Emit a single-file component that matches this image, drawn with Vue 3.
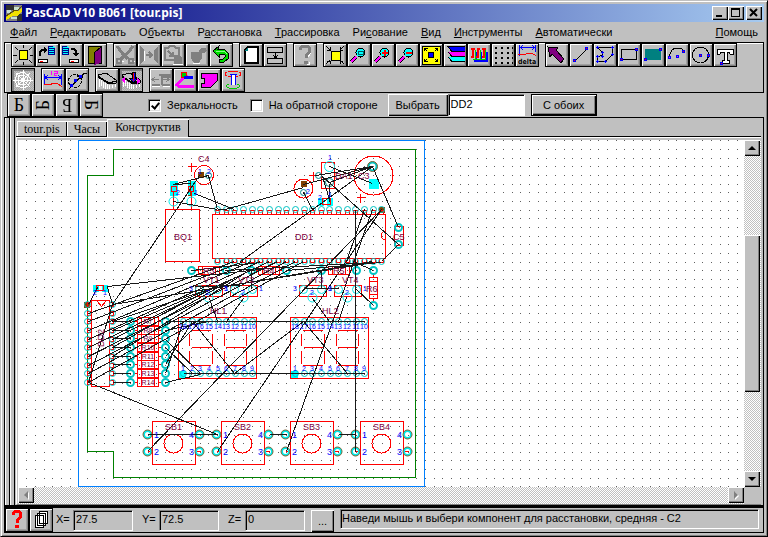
<script setup>
import { ref } from 'vue'

const menu = [
  ['', 'Ф', 'айл'], ['', 'Р', 'едактировать'], ['О', 'б', 'ъекты'], ['Р', 'а', 'сстановка'],
  ['', 'Т', 'рассировка'], ['Ри', 'с', 'ование'], ['', 'В', 'ид'], ['', 'И', 'нструменты'], ['', 'А', 'втоматически'],
]

const K = 'stroke="#000" fill="none"'
const dot = (x, y) => `<rect x="${x}" y="${y}" width="3" height="3" fill="#00f"/><rect x="${x + 1}" y="${y + 1}" width="1" height="1" fill="#f0f"/>`
const redDot = (x, y) => `<rect x="${x}" y="${y}" width="3" height="3" fill="#00f"/><rect x="${x + 1}" y="${y + 1}" width="1" height="1" fill="#f00"/>`
const doc = x => `<path d="M${x} 2h5l2 2v7h-7z" fill="#0ff"/><path d="M${x} 2.500h5M${x} 4.500h7M${x} 6.500h7M${x} 8.500h7M${x} 10.500h7M${x + 0.5} 2v9M${x + 6.5} 4v7" stroke="#008"/>`
const drive = x => `<path d="M${x}.500 15.500h9v3h-9z" fill="#fff" stroke="#000"/><path d="M${x + 2} 17h3" stroke="#f00"/>`
const lens = inner => `<path d="M3 18l5-5" stroke="#000" stroke-width="4"/><path d="M3 18l5-5" stroke="#f0f" stroke-width="2"/><circle cx="12.5" cy="8.5" r="4.5" fill="#0ff" stroke="#000"/>${inner}`
const board = '<path d="M2 6l8-2 10 7v3l-7 1L2 8z" fill="#c0c0c0" stroke="#000"/><path d="M2 7l11 7 7-2" fill="none" stroke="#000"/><path d="M3.500 10v8M5.500 11v6M7.500 13v6M9.500 14v6M11.500 15v5M13.500 16v4M16.500 16v3M19.500 15v3" stroke="#fff"/>'
const G = '#808080'

const art = {
  sun: `<path d="M7.500 6.500h8v9h-8z" fill="#ff0" stroke="#000"/><path d="M7 8l2-2M11.500 1v3M11.500 18v3M1 11.500h4M18 11.500h3M3 3l3 3M20 3l-3 3M3 19l3-3M20 19l-3-3" ${K}/>`,
  load: doc(12) + drive(2) + `<path d="M4 12V8l2-2h3" ${K} stroke-width="2"/><path d="M8 3l4 3-4 3z"/>`,
  save: doc(2) + drive(9) + `<path d="M11 5h3l2 2v3" ${K} stroke-width="2"/><path d="M13 9h6l-3 4z"/>`,
  exit: '<path d="M4.500 2.500h13v17h-13z" fill="#808000" stroke="#000"/><path d="M17 3v16l-7 2V9l4-3z" fill="#800080"/><path d="M10 20V9l7-6" fill="none" stroke="#000"/>',
  cut: `<path d="M3 2l5 7 2 2 4 4M19 2l-5 7-3 2-4 4" stroke="${G}" stroke-width="3" fill="none"/><circle cx="5" cy="17" r="2.500" fill="none" stroke="${G}" stroke-width="2"/><circle cx="17" cy="17" r="2.500" fill="none" stroke="${G}" stroke-width="2"/><path d="M8 17h2M20 17h1" stroke="#fff"/>`,
  split: `<path d="M2 2v18l4-4V6zM20 2v18l-4-4V6z" fill="${G}"/><path d="M8 11h6M11 8l3 3-3 3" stroke="${G}" stroke-width="2" fill="none"/><path d="M6.500 17V7" stroke="#fff"/>`,
  paste: `<path d="M3 4h3l2-2h4l2 2h3v12H3z" fill="none" stroke="${G}" stroke-width="2"/><path d="M6 7l5 5M11 8v4H7" fill="none" stroke="${G}" stroke-width="2"/><path d="M12 11h5l3 3v6h-8z" fill="${G}"/><path d="M11 20.500h10" stroke="#fff"/>`,
  bomb: `<path d="M5 8h11v6l-3 5H8l-3-5z" fill="${G}"/><path d="M12 9l3-5h5l1 3-3 2z" fill="${G}"/><path d="M7 19.500h7" stroke="#fff"/>`,
  undo: '<path d="M8 5h6l4 4v6l-4 3H9v-3h4l2-2v-2l-3-1H9v3L3 7l6-5z" fill="#0d0" stroke="#000"/><path d="M6 7h8l3 3" fill="none" stroke="#8f8"/>',
  blank: `<path d="M8 3h10v16H5V6z" fill="#fff" stroke="#000" stroke-width="2"/><path d="M5 7l3-4v4z" fill="#008080"/>`,
  fit: `<path d="M3.500 3.500h15v5h-15zM3.500 14.500h15v5h-15zM11.500 9v5M9 11l2.500 3 2.500-3" ${K}/>`,
  help: `<path d="M6 6q0-4 5-4t5 4q0 3-4 5v3" stroke="${G}" stroke-width="3" fill="none"/><path d="M10 17h4v3h-4z" fill="${G}"/><path d="M13 20.500h2v-3M14 13l3-4" stroke="#fff" fill="none"/>`,
  zoomfit: `<path d="M7 7h9v9H7z" fill="#ff0" stroke="#000"/><path d="M2 2l4 4M20 2l-4 4M2 20l4-4M20 20l-4-4M3 6h3V3M19 6h-3V3M3 17h3v3M19 17h-3v3" ${K}/>`,
  zoombox: lens('<path d="M10 7h5v3h-5z" fill="#0ff" stroke="#006060"/>'),
  zoomin: lens('<path d="M10 8.500h6M13 5.500v6" stroke="#f00" stroke-width="2"/>'),
  zoomout: lens('<path d="M10 8.500h6" stroke="#f00" stroke-width="2"/>'),
  all: `<path d="M2 2h18v18H2z" fill="#ff0" stroke="#000"/><circle cx="11" cy="11" r="3" fill="#00f" stroke="#000"/><path d="M4.500 7V4.500h3M4 4l3 3M17.500 7V4.500h-3M18 4l-3 3M4.500 15v2.500h3M4 18l3-3M17.500 15v2.500h-3M18 18l-3-3" ${K}/>`,
  layers: '<path d="M4 3h17v4H8z" fill="#00f"/><path d="M4 8h17v4H8z" fill="#f0f"/><path d="M4 13h17v4H8z" fill="#0ff"/><path d="M3 2.500h18M4 3l4 4.500h13M4 8l4 4.500h13M4 13l4 4.500h13" fill="none" stroke="#000"/>',
  comb: '<path d="M6 17h14M8 8v9M13 8v9M19 8v9" stroke="#00f" stroke-width="2"/><path d="M5 15h13M7 6v9M12 6v9M17 6v9" stroke="#0c0"/><path d="M3 5h4M9 5h3M14 5h4M5 5v8M10 5v8M16 5v8M3 13h3M8 13h3M14 13h3" stroke="#f00" stroke-width="2"/>',
  grid: '<path d="M3 3h2v2H3zM9 3h2v2H9zM15 3h2v2h-2zM3 8h2v2H3zM9 8h2v2H9zM15 8h2v2h-2zM3 13h2v2H3zM9 13h2v2H9zM15 13h2v2h-2zM3 18h2v2H3zM9 18h2v2H9zM15 18h2v2h-2zM20 3h1v2h-1zM20 8h1v2h-1zM20 13h1v2h-1zM20 18h1v2h-1z"/>',
  delta: '<path d="M3.500 1v11M19.500 1v7M4 3.500h15M7 1.500l-3 2 3 2M16 1.500l3 2-3 2" stroke="#00f" fill="none"/><path d="M2 10.500h7l2-1h5l4 2" stroke="#f00" fill="none"/><text x="2" y="20" font-family="DejaVu Sans Condensed" font-weight="bold" font-size="7">delta</text>',
  arrow: '<path d="M2 3l10 1-2 2 8 9-3 4-9-9-2 3z" fill="#800080" stroke="#000"/>',
  line: `<path d="M5 17L17 5" ${K}/>` + redDot(3, 15) + redDot(15, 3),
  poly: `<path d="M3.500 3.500h15v7l-7 7h-8v-5l5-1v-3z" ${K}/>` + [[2, 2], [17, 2], [17, 9], [10, 16], [2, 16], [2, 11], [7, 11], [7, 7]].map(p => `<path d="M${p[0]} ${p[1] + 1.5}h3M${p[0] + 1.5} ${p[1]}v3" stroke="#00f"/>`).join(''),
  rect: `<path d="M3.500 5.500h15v10h-15z" ${K}/>` + redDot(2, 14) + redDot(17, 4),
  fill: '<path d="M3 5h16v11H3z" fill="#008080"/>' + redDot(2, 14) + redDot(17, 4),
  arc: `<path d="M3 13Q5 4 11 4q5 0 7 3" ${K}/>` + dot(2, 12) + dot(10, 11) + redDot(16, 6),
  circle: `<circle cx="10.500" cy="11" r="8" ${K}/>` + redDot(9, 10) + redDot(17, 10),
  text: '<path d="M3 5h16v5h-3l-1-2h-2v8h2v3H8v-3h2V8H7l-1 2H3z" fill="#fff" stroke="#000"/>' + redDot(6, 18),
  web: '<path d="M11 1v20M1 11h20M4 4l14 14M18 4L4 18" stroke="#fff"/><path d="M11 3l5 3 3 5-3 6-5 2-6-2-2-6 2-6zM11 6l4 2 1 3-2 4-3 1-4-1-1-4 1-4zM11 9l2 2-2 2-2-2z" stroke="#fff" fill="none"/>',
  dim: '<path d="M2.500 5v11M19.500 5v11M3 8.500h16M6 6l-3 2.500 3 2.500M16 6l3 2.500-3 2.500" stroke="#00f" fill="none"/><path d="M2 15.500h7l1-1h5l5 3" stroke="#f00" fill="none"/><path d="M9.500 2v4M12 2.500h3v2h-3v2h3" stroke="#f0f" fill="none"/>',
  diam: `<circle cx="9" cy="12" r="6.500" ${K} stroke-dasharray="3 1"/><path d="M3 20L18 4h3M11 8l6-2-2 5" ${K}/><path d="M8 10h3v3H8zM4 15h3v3H4zM13 6h3v3h-3z" fill="#00f"/>`,
  board,
  place: board + '<path d="M12 3h3v6h3l-4.500 5L9 9h3z" fill="#00f" stroke="#000"/><path d="M13.500 4v8" stroke="#f00"/><path d="M1 11l4-3v6zM21 12l-4-3v6z" fill="#f0f"/>',
  shift: `<path d="M2 15.500h8M12 15.500h8M9 5.500h11v2h-8v8" stroke="${G}" stroke-width="2" fill="none"/><path d="M2 10.500h7M13 10.500h6M5 8l-3 2.500 3 2.500M16 8l3 2.500-3 2.500" stroke="${G}" fill="none"/><path d="M2 17.500h8M13 17.500h7" stroke="#fff"/>`,
  route: '<path d="M2 17L11 7h3M4 17h16" stroke="#f0f" stroke-width="3" fill="none"/><circle cx="10" cy="6" r="3" fill="#0c0" stroke="#f00"/><path d="M10 7h9v3h-9z" fill="#00f"/>',
  zone: '<path d="M3 4h16v8l-6 6H3v-4h3V9H3z" fill="#f0f" stroke="#000"/>',
  via: '<ellipse cx="11" cy="5" rx="8" ry="2.500" stroke="#f00" fill="none"/><path d="M9.500 6v10M13.500 6v10" stroke="#00f"/><path d="M10 6h3v10h-3z" fill="#fff"/><path d="M8 5.500h7" stroke="#00f"/><path d="M7 15q-6 2 0 4h8q6-2 0-4" stroke="#0c0" fill="none"/>',
}

const rows = [
  [
    [['sun', 'Перерисовать'], ['load', 'Загрузить'], ['save', 'Сохранить'], ['exit', 'Выход']],
    [['cut', 'Вырезать'], ['split', 'Раздвинуть'], ['paste', 'Вставить'], ['bomb', 'Удалить'], ['undo', 'Отменить']],
    [['blank', 'Новый'], ['fit', 'Выровнять']],
    [['help', 'Справка']],
    [['zoomfit', 'Всё поле'], ['zoombox', 'Окно'], ['zoomin', 'Увеличить'], ['zoomout', 'Уменьшить'], ['all', 'Показать всё'], ['layers', 'Слои'], ['comb', 'Цепи'], ['grid', 'Сетка'], ['delta', 'Дельта']],
    [['arrow', 'Выбор'], ['line', 'Линия'], ['poly', 'Полигон'], ['rect', 'Прямоугольник'], ['fill', 'Заливка'], ['arc', 'Дуга'], ['circle', 'Окружность'], ['text', 'Текст']],
  ],
  [
    [['web', 'Связи', true]],
    [['dim', 'Размер'], ['diam', 'Диаметр']],
    [['board', 'Плата'], ['place', 'Расстановка', true]],
    [['shift', 'Сдвиг'], ['route', 'Трасса'], ['zone', 'Зона'], ['via', 'Переход']],
  ],
]

const turns = ['t0', 't1', 't2', 't3']
const mirror = ref(true)
const back = ref(false)
const part = ref('DD2')
const tabs = ['tour.pis', 'Часы', 'Конструктив']
const active = ref(2)
const coords = ref([{ n: 'X', v: '27.5' }, { n: 'Y', v: '72.5' }, { n: 'Z', v: '0' }])

// Board drawing
const P = 8.65
const seq = (n, a, step = P) => Array.from({ length: n }, (_, i) => Math.round(a + i * step))
let gridPath = ''
for (let j = 0; j < 90; j++) {
  for (let i = 1; i < 180; i++) gridPath += `M${Math.round(17.7 + i * 8.667)} ${Math.round(140.4 + j * P)}h1v1h-1z`
}
const dd1 = seq(20, 217)
const dd2 = seq(10, 304)
const rowsY = seq(8, 321)
const displays = [{ x: 178, n: 'HL1' }, { x: 290, n: 'HL2' }]
const hp = seq(9, 5)
const switches = [{ x: 152, n: 'SB1' }, { x: 221, n: 'SB2' }, { x: 290, n: 'SB3' }, { x: 360, n: 'SB4' }]
const pads = [[-5, 434], [47, 434], [-5, 451], [47, 451]]
const transistors = [{ x: 195, n: 'VT1' }, { x: 230, n: 'VT2' }, { x: 299, n: 'VT3' }, { x: 334, n: 'VT4' }]
const resistors = [{ x: 191, n: 'R3' }, { x: 251, n: 'R4' }, { x: 321, n: 'R5' }]
const seg = x => `M${x + 12} 330h20M${x + 13} 347h20M${x + 12} 365h20M${x + 11} 333v12M${x + 11} 350v13M${x + 34} 333v12M${x + 34} 350v13M${x + 47} 330h20M${x + 47} 347h20M${x + 47} 365h20M${x + 46} 333v12M${x + 46} 350v13M${x + 68} 333v12M${x + 68} 350v13`

const wires = [
  [112, 304, 199, 175], [173, 184, 208, 175], [173, 184, 191, 183], [173, 201, 217, 209], [194, 193, 234, 209], [208, 175, 217, 209],
  [217, 209, 225, 209], [225, 209, 303, 187], [303, 184, 372, 166], [303, 192, 312, 209], [240, 261, 372, 166],
  [329, 166, 372, 183], [329, 182, 372, 166], [315, 175, 372, 166], [372, 166, 398, 227], [322, 176, 398, 244], [398, 244, 381, 261], [329, 183, 329, 201], [322, 176, 329, 199],
  [355, 209, 355, 451], [381, 209, 147, 451], [381, 209, 217, 451], [372, 209, 286, 451], [364, 209, 346, 261],
  [97, 287, 88, 304], [107, 287, 112, 304], [88, 382, 217, 434], [88, 382, 112, 304],
  [107, 286, 286, 266], [112, 304, 373, 262], [112, 304, 200, 290], [200, 290, 372, 261], [191, 270, 260, 262], [225, 270, 373, 262], [286, 270, 381, 262],
  [147, 434, 217, 434], [269, 434, 286, 434], [338, 434, 355, 434],
  [346, 297, 338, 321], [312, 298, 329, 321], [209, 298, 217, 321], [243, 298, 226, 321], [355, 288, 373, 305], [251, 270, 251, 288], [321, 270, 321, 288], [303, 288, 338, 288], [355, 262, 373, 270], [195, 286, 240, 285],
  [183, 321, 364, 321], [183, 373, 364, 373], [165, 382, 200, 374], [192, 321, 234, 373], [234, 373, 303, 321], [303, 321, 347, 373],
  [165, 339, 200, 373], [165, 347, 192, 373], [165, 356, 200, 321], [165, 364, 192, 321], [165, 373, 183, 321], [165, 330, 208, 321], [165, 321, 217, 321],
  ...rowsY.map(y => [112, y, 130, y]),
  ...dd2.slice(1).map((y, i) => [88, y, 234 + Math.round(i * P), 261]),
  ...dd2.slice(2, 7).map((y, i) => [112, y, 208 + i * 9, 289 - i * 4]),
]
const wirePath = wires.map(w => `M${w[0]} ${w[1]}L${w[2]} ${w[3]}`).join('')
</script>

<template>
  <div class="window">
    <header class="title">
      <svg class="logo" width="16" height="16" viewBox="0 0 16 16" shape-rendering="crispEdges">
        <path d="M0 0h16v16H0z" fill="#808080" /><path d="M0 0h8v5H0zM11 9h5v7h-5z" fill="#303030" />
        <path d="M1 5h4v3H1zM8 2h5v3H8zM5 12h6v2H5z" fill="#c8e0d0" />
        <path d="M0 12l9-6h3l4-4v4l-5 5-4 0-7 4z" fill="#f0e000" /><path d="M0 11l9-6h3l4-4" fill="none" stroke="#605000" />
      </svg>
      <h1>PasCAD V10 B061 [tour.pis]</h1>
      <div class="winbtns">
        <button class="wb" aria-label="Свернуть"><svg width="12" height="10"><path d="M2 8h6v2H2z" /></svg></button>
        <button class="wb" aria-label="Развернуть"><svg width="12" height="10" shape-rendering="crispEdges"><path d="M1 1h9v9H1zM2 3v6h7V3z" fill-rule="evenodd" /></svg></button>
        <button class="wb close" aria-label="Закрыть"><svg width="12" height="10"><path d="M2 2l7 7M9 2L2 9" stroke="#000" stroke-width="2" /></svg></button>
      </div>
    </header>

    <nav class="menu">
      <a v-for="m in menu" :key="m[2]" href="#">{{ m[0] }}<u>{{ m[1] }}</u>{{ m[2] }}</a>
      <a href="#" class="last"><u>П</u>омощь</a>
    </nav>

    <div class="tools">
      <div v-for="(row, r) in rows" :key="r" class="toolrow">
        <div v-for="(group, g) in row" :key="g" class="group">
          <button v-for="b in group" :key="b[0]" class="tool" :class="{ down: b[2] }" :aria-label="b[1]">
            <svg width="22" height="22" viewBox="0 0 22 22" shape-rendering="crispEdges" v-html="art[b[0]]"></svg>
          </button>
        </div>
      </div>
    </div>

    <div class="options">
      <div class="group">
        <button v-for="t in turns" :key="t" class="tool letter"><span :class="t">Б</span></button>
      </div>
      <label class="check first"><input v-model="mirror" type="checkbox"><span>Зеркальность</span></label>
      <label class="check"><input v-model="back" type="checkbox"><span>На обратной стороне</span></label>
      <button class="push pick">Выбрать</button>
      <input v-model="part" class="part" type="text" aria-label="Компонент">
      <button class="push both">С обоих</button>
    </div>

    <main class="pane">
      <div class="grips"><i></i><i></i></div>
      <div class="book">
        <div class="tabs">
          <button v-for="(t, i) in tabs" :key="t" class="tab" :class="{ on: i === active }" @click="active = i">{{ t }}</button>
        </div>
        <div class="sheet">
          <div class="view">
            <svg class="pcb" shape-rendering="crispEdges">
              <g transform="translate(-18 -140)">
                <path :d="gridPath" fill="#606060" />
                <g fill="none" transform="translate(.5 .5)">
                  <path d="M78 140H424V486H78z" stroke="#0080ff" />
                  <path d="M113 149H415V477H113V451H87V175H113z" stroke="#008000" />

                  <path d="M169 180h8v15h-8zM187 180h8v15h-8zM368 178h10v10h-10zM317 197h6v8h-6zM326 197h6v8h-6zM92 284h6v7h-6zM101 284h6v7h-6zM178 370h7v7h-7zM290 370h7v7h-7z" fill="#00ffff" />
                  <path d="M197 171h6v6h-6zM300 180h6v6h-6zM378 206h6v6h-6zM83 301h6v6h-6z" fill="#804000" />
                  <path d="M187 180h3v15h-3M178 378h7M290 378h7" stroke="#804000" />

                  <g stroke="#ff0000">
                    <path d="M165 209h34v52h-34zM212 214h173v44h-173zM321 162h13v26h-13zM394 226h9v19h-9zM91 300h18v86h-18z" />
                    <path d="M171 186h5v5h-5zM188 186h5v5h-5zM173 191v18M191 191v18M322 198h8v6h-8zM96 285h7v5h-7zM97 301l4 5 4-5M385 231h-2l-2 2v4l2 2h2" />
                    <path d="M187 166h9M191 162v9M308 175h9M313 171v9M356 197h9M360 193v9" />
                    <circle cx="203.500" cy="174.500" r="9.500" /><circle cx="303" cy="188" r="9.500" /><circle cx="373" cy="175" r="19.500" />
                    <path v-for="x in dd1" :key="x" :d="`M${x - 2} 214v-4h4v4M${x - 2} 258v4h4v-4`" />
                    <path v-for="y in dd2" :key="y" :d="`M91 ${y - 2}h-4v4h4M109 ${y - 2}h4v4h-4`" />
                    <path v-for="y in rowsY" :key="y" :d="`M137 ${y - 4}h21v8h-21zM141 ${y - 4}v8M154 ${y - 4}v8M134 ${y}h3M158 ${y}h3`" />
                    <path v-for="r in resistors" :key="r.n" :d="`M${r.x + 7} 266h21v8h-21zM${r.x + 11} 266v8M${r.x + 24} 266v8M${r.x + 3} 270h4M${r.x + 28} 270h4`" />
                    <path d="M369 277h8v21h-8zM369 281h8M369 294h8M373 273v4M373 298v4" />
                    <path v-for="t in transistors" :key="t.n" :d="`M${t.x} 285h27v11h-27z`" />
                    <path v-for="d in displays" :key="d.n" :d="`M${d.x} 317h78v61h-78z` + seg(d.x)" />
                    <template v-for="s in switches" :key="s.n">
                      <path :d="`M${s.x} 421h43v43h-43zM${s.x - 5} 451h5M${s.x + 43} 451h5`" />
                      <circle :cx="s.x + 21" cy="443" r="9.500" />
                    </template>
                  </g>

                  <g class="smooth" stroke="#00e8e8">
                    <circle cx="173" cy="201" r="4.500" /><circle cx="191" cy="201" r="4.500" />
                    <g stroke="#008888">
                      <circle cx="208" cy="175" r="3" /><circle cx="303" cy="192" r="3" />
                      <circle cx="329" cy="182" r="4" /><circle cx="318" cy="175" r="3" />
                    </g>
                    <circle cx="329" cy="166" r="5" />
                    <g stroke="#00c4c4" stroke-width="2">
                      <circle cx="372" cy="166" r="4" /><circle cx="398" cy="227" r="3.500" /><circle cx="398" cy="244" r="3.500" />
                      <circle cx="373" cy="270" r="3.500" /><circle cx="373" cy="305" r="3.500" />
                      <template v-for="r in resistors" :key="r.n"><circle :cx="r.x" cy="270" r="3.500" /><circle :cx="r.x + 35" cy="270" r="3.500" /></template>
                      <template v-for="y in rowsY" :key="y"><circle cx="130" :cy="y" r="3.500" /><circle cx="165" :cy="y" r="3.500" /></template>
                      <template v-for="s in switches" :key="s.n">
                        <circle v-for="p in pads" :key="p.join()" :cx="s.x + p[0]" :cy="p[1]" r="3.500" stroke="#00e8e8" />
                      </template>
                    </g>
                    <g stroke="#00c4c4">
                      <template v-for="x in dd1" :key="x"><circle :cx="x" cy="209" r="3" /><circle :cx="x" cy="261" r="3" /></template>
                      <template v-for="y in dd2" :key="y"><circle cx="87" :cy="y" r="3" /><circle cx="112" :cy="y" r="3" /></template>
                      <template v-for="d in displays" :key="d.n">
                        <template v-for="x in hp" :key="x"><circle :cx="d.x + x" cy="321" r="3" /><circle :cx="d.x + x" cy="373" r="3" /></template>
                      </template>
                    </g>
                    <template v-for="t in transistors" :key="t.n">
                      <circle :cx="t.x + 4" cy="289" r="4" /><circle :cx="t.x + 22" cy="289" r="4" /><circle :cx="t.x + 13" cy="297" r="4.500" />
                    </template>
                  </g>

                  <g class="smooth" stroke="#806030">
                    <template v-for="s in switches" :key="s.n">
                      <circle v-for="p in pads" :key="p.join()" :cx="s.x + p[0]" :cy="p[1]" r="4.500" />
                    </template>
                    <circle cx="372" cy="166" r="5" />
                  </g>

                  <path :d="wirePath" stroke="#181818" />
                </g>

                <g class="ref">
                  <text x="198" y="162">C4</text><text x="174" y="240">BQ1</text><text x="295" y="240">DD1</text>
                  <text x="335" y="179">DA1</text><text x="358" y="179">C3</text><text x="393" y="240">C5</text>
                  <text x="366" y="292">R6</text><text x="210" y="314">HL1</text><text x="322" y="314">HL2</text>
                  <text x="104" y="347" transform="rotate(-90 104 347)">DD2</text>
                  <text v-for="t in transistors" :key="t.n" :x="t.x + 8" y="283">{{ t.n }}</text>
                  <text v-for="r in resistors" :key="r.n" :x="r.x + 12" y="274">{{ r.n }}</text>
                  <text v-for="s in switches" :key="s.n" :x="s.x + 13" y="430">{{ s.n }}</text>
                </g>
                <g class="ref row">
                  <text v-for="(y, i) in rowsY" :key="y" x="148" :y="y + 3">R{{ i + 7 }}</text>
                </g>
                <g class="num">
                  <template v-for="s in switches" :key="s.n">
                    <text :x="s.x + 2" y="438">1</text><text :x="s.x + 37" y="438">4</text>
                    <text :x="s.x + 2" y="455">2</text><text :x="s.x + 37" y="455">3</text>
                  </template>
                </g>
                <g class="num tiny">
                  <template v-for="d in displays" :key="d.n">
                    <text v-for="(x, i) in hp" :key="x" :x="d.x + x" y="329">{{ 18 - i }}</text>
                    <text v-for="(x, i) in hp" :key="i" :x="d.x + x" y="371">{{ i + 1 }}</text>
                  </template>
                  <template v-for="t in transistors" :key="t.n">
                    <text :x="t.x + 13" y="295">2</text><text :x="t.x - 4" y="291">3</text><text :x="t.x + 31" y="291">1</text>
                  </template>
                  <text x="200" y="174">1</text><text x="209" y="174">2</text><text x="308" y="194">2</text><text x="330" y="160">1</text>
                  <text x="178" y="195">2</text><text x="196" y="195">1</text><text x="320" y="200">2</text><text x="330" y="197">1</text>
                  <text x="95" y="295">2</text><text x="105" y="295">1</text>
                </g>
              </g>
            </svg>
          </div>
          <div class="vbar">
            <button class="sb" aria-label="Вверх"><svg width="8" height="4"><path d="M4 0l4 4H0z" /></svg></button>
            <div class="vtrack"><div class="thumb"></div></div>
            <button class="sb" aria-label="Вниз"><svg width="8" height="4"><path d="M0 0h8L4 4z" /></svg></button>
          </div>
          <div class="hbar">
            <button class="sb off" aria-label="Влево"><svg width="5" height="8"><path d="M4 0v8L0 4z" fill="#808080" /></svg></button>
            <div class="space"></div>
            <button class="sb off" aria-label="Вправо"><svg width="5" height="8"><path d="M0 0l4 4-4 4z" fill="#808080" /></svg></button>
          </div>
          <div class="corner"></div>
        </div>
      </div>
    </main>

    <footer class="status">
      <div class="group">
        <button class="tool" aria-label="Помощь"><svg width="22" height="22" shape-rendering="crispEdges"><path d="M7 6q0-4 4-4t4 4q0 3-4 5v3" fill="none" stroke="#f00" stroke-width="3" /><path d="M9 16h4v3H9z" fill="#f00" /></svg></button>
        <button class="tool" aria-label="Окна"><svg width="22" height="22" shape-rendering="crispEdges"><path d="M9.500 2.500h8v12h-8zM7.500 4.500h8v12h-8zM5.500 6.500h8v12h-8z" fill="#fff" stroke="#000" /></svg></button>
      </div>
      <label v-for="c in coords" :key="c.n" class="coord"><span>{{ c.n }}=</span><input v-model="c.v" type="text"></label>
      <button class="push dots">...</button>
      <p class="msg">Наведи мышь и выбери компонент для расстановки, средняя - С2</p>
    </footer>
  </div>
</template>

<style>
body { margin: 0; overflow: hidden; }
</style>

<style scoped>
* { box-sizing: border-box; }
button, input { font: inherit; color: #000; margin: 0; padding: 0; border-radius: 0; }
button { background: #c0c0c0; border: 0; }
.window {
  height: 100vh; display: flex; flex-direction: column; background: #c0c0c0;
  border: 1px solid; border-color: #c0c0c0 #000 #000 #c0c0c0;
  box-shadow: inset 1px 1px #fff, inset -1px -1px #808080; padding: 3px;
  font: 11px/14px "Liberation Sans", Arial, sans-serif; color: #000;
}
.title { height: 18px; flex: none; display: flex; align-items: center; background: linear-gradient(90deg, #000080, #a6caf0); padding: 0 2px; }
.title h1 { flex: 1; margin: 0 0 0 3px; font: bold 12px/18px "Noto Sans", "Liberation Sans", sans-serif; color: #fff; white-space: nowrap; }
.winbtns { display: flex; }
.wb { width: 16px; height: 14px; display: flex; align-items: flex-start; justify-content: center; padding-top: 1px; box-shadow: inset 1px 1px #fff, inset -1px -1px #000, inset -2px -2px #808080; }
.close { margin-left: 2px; }
.menu { display: flex; flex: none; gap: 13px; height: 20px; padding: 0 6px; align-items: center; }
.menu a { color: #000; text-decoration: none; white-space: nowrap; }
.menu .last { margin-left: auto; }
.tools { flex: none; border: 1px solid #000; display: flex; flex-direction: column; gap: 1px; padding-left: 6px; box-shadow: inset 1px 1px #fff; }
.toolrow { display: flex; gap: 6px; height: 24px; }
.group { display: flex; flex: none; }
.tool { width: 24px; height: 24px; border: 1px solid #000; position: relative; box-shadow: inset 1px 1px #fff, inset -1px -1px #808080, inset -2px -2px #a0a0a0; }
.tool svg { display: block; }
.tool.down { box-shadow: inset 1px 1px #808080, inset 2px 2px #808080; background: repeating-conic-gradient(#a8a8a8 0 25%, #c0c0c0 0 50%) 0 0 / 2px 2px; }
.letter { font: 18px/20px "Liberation Serif", serif; display: flex; align-items: center; justify-content: center; }
.letter span { display: block; }
.t1 { transform: rotate(-90deg); }
.t2 { transform: rotate(180deg); }
.t3 { transform: rotate(90deg); }
.options { flex: none; height: 24px; display: flex; align-items: center; padding-left: 3px; }
.check { display: flex; align-items: center; gap: 6px; margin-left: 12px; white-space: nowrap; height: 20px; }
.check.first { margin-left: 45px; }
.check input { appearance: none; width: 13px; height: 13px; background: #fff; border: 1px solid; border-color: #808080 #fff #fff #808080; box-shadow: inset 1px 1px #000, inset -1px -1px #dfdfdf; position: relative; }
.check input:checked::after { content: ""; position: absolute; left: 4px; top: 1px; width: 3px; height: 6px; border: solid #000; border-width: 0 2px 2px 0; transform: rotate(40deg); }
.push { box-shadow: inset 1px 1px #fff, inset -1px -1px #000, inset -2px -2px #808080; height: 22px; }
.pick { width: 60px; margin-left: 10px; }
.part { width: 77px; height: 22px; padding: 0 2px 2px; background: #fff; border: 1px solid; border-color: #808080 #fff #fff #808080; box-shadow: inset 1px 1px #000; }
.both { width: 66px; margin-left: 6px; border: 1px solid #000; }
.pane { flex: 1; min-height: 0; display: flex; border: solid #000; border-width: 1px 1px 3px; }
.grips { display: flex; flex: none; }
.grips i { width: 5px; border-left: 1px solid #fff; border-right: 1px solid #000; }
.book { flex: 1; min-width: 0; display: flex; flex-direction: column; padding: 0 2px 0 1px; }
.tabs { flex: none; height: 19px; display: flex; align-items: flex-end; padding-left: 1px; font: 12px/14px "Liberation Serif", serif; border-bottom: 1px solid #000; }
.tab { height: 15px; padding: 0 7px; box-shadow: inset 1px 1px #fff, inset -1px 0 #000; white-space: nowrap; }
.tab.on { height: 18px; margin-bottom: -1px; padding: 0 8px 2px; }
.sheet { flex: 1; min-height: 0; display: grid; grid-template: minmax(0, 1fr) 17px / minmax(0, 1fr) 17px; border-top: 1px solid #fff; border-left: 1px solid #fff; padding: 2px 0 0 1px; border-bottom: 1px solid #808080; }
.view { background: #fff; overflow: hidden; }
.pcb { display: block; width: 100%; height: 100%; }
.smooth { shape-rendering: geometricPrecision; }
.ref { font: 9px "Liberation Sans", sans-serif; fill: #800040; }
.row { font-size: 7px; text-anchor: middle; }
.num { font: 9px "Liberation Sans", sans-serif; fill: #0000ff; }
.tiny { font-size: 7px; text-anchor: middle; }
.vbar, .hbar { display: flex; background: repeating-conic-gradient(#fff 0 25%, #c0c0c0 0 50%) 0 0 / 2px 2px; }
.vbar { flex-direction: column; }
.sb { width: 16px; height: 16px; flex: none; display: flex; align-items: center; justify-content: center; box-shadow: inset 1px 1px #fff, inset -1px -1px #000, inset -2px -2px #808080; }
.off svg { filter: drop-shadow(1px 1px 0 #fff); }
.vtrack { flex: 1; padding-right: 1px; display: grid; grid-template-rows: 25% 50% 25%; }
.thumb { grid-row: 2; background: #c0c0c0; box-shadow: inset 1px 1px #fff, inset -1px -1px #000, inset -2px -2px #808080; }
.space { flex: 1; }
.corner { background: #c0c0c0; }
.status { flex: none; height: 25px; display: flex; align-items: flex-start; padding: 0 4px 0 0; border: solid #000; border-width: 0 1px 1px; }
.coord { display: flex; margin-left: 3px; line-height: 22px; }
.coord + .coord { margin-left: 9px; }
.coord span { width: 17px; }
.coord input { width: 60px; height: 21px; margin-top: 2px; padding: 0 2px 4px; background: #c0c0c0; border: 1px solid; border-color: #808080 #fff #fff #808080; box-shadow: inset 1px 1px #000; }
.dots { width: 23px; margin: 2px 0 0 6px; }
.msg { flex: 1; margin: 1px 0 0 6px; height: 20px; padding: 1px; border: 1px solid; border-color: #808080 #fff #fff #808080; box-shadow: inset 1px 1px #000; white-space: nowrap; overflow: hidden; }
</style>
